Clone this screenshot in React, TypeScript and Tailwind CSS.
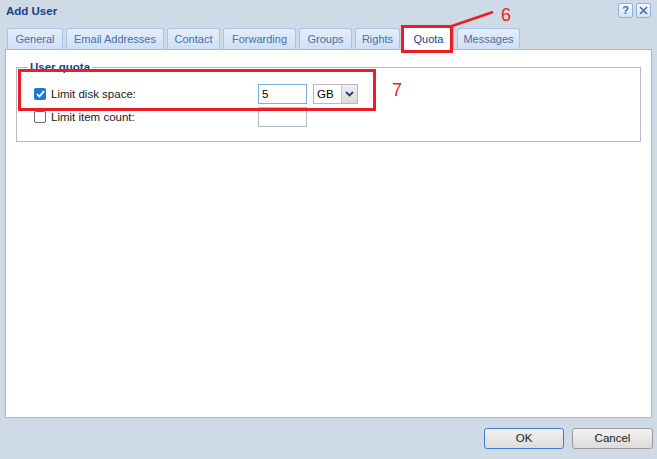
import React from "react";

const tabs = ["General", "Email Addresses", "Contact", "Forwarding", "Groups", "Rights", "Quota", "Messages"];
const widths = [56, 98, 53, 73, 53, 45, 51, 63];

export default function App() {
  return (
    <div
      className="relative w-[657px] h-[459px] bg-[#cfdae7] overflow-hidden flex flex-col text-[11px]"
      style={{ fontFamily: '"Liberation Sans", Arial, sans-serif' }}
    >
      {/* title bar */}
      <div className="h-[25px] flex items-center pl-[6px] pr-[6px] pt-[0px]">
        <div className="font-bold text-[#15428b] text-[11.5px] -mt-[2px]">Add User</div>
        <div className="ml-auto flex gap-[3px] -mt-[4px]">
          <div className="w-[15px] h-[15px] rounded-[2px] border border-[#8eb0dc] bg-gradient-to-b from-[#f6f9fd] to-[#d6e3f3] flex items-center justify-center text-[11px] font-bold text-[#3d6cb0] leading-none">?</div>
          <div className="w-[15px] h-[15px] rounded-[2px] border border-[#8eb0dc] bg-gradient-to-b from-[#f6f9fd] to-[#d6e3f3] flex items-center justify-center">
            <svg width="9" height="9" viewBox="0 0 9 9"><path d="M1 1L8 8M8 1L1 8" stroke="#3d6cb0" strokeWidth="1.6" /></svg>
          </div>
        </div>
      </div>
      {/* tabs */}
      <div className="flex items-end pl-[7px] h-[24px] gap-[3px]">
        {tabs.map((t, i) => {
          const active = t === "Quota";
          return (
            <div
              key={t}
              style={{ width: widths[i] }}
              className={
                active
                  ? "h-[24px] -mb-[1px] z-10 rounded-t-[3px] border border-b-0 border-[#99bbe8] bg-white text-[#15428b] flex items-center justify-center pt-[2px]"
                  : "h-[21px] rounded-t-[3px] border border-b-0 border-[#a9c3e6] bg-gradient-to-b from-[#e4eefb] to-[#cfdff4] text-[#4a6fa5] flex items-center justify-center pt-[1px]"
              }
            >
              {t}
            </div>
          );
        })}
      </div>
      {/* panel */}
      <div className="mx-[5px] h-[369px] bg-white border border-[#99bbe8] pt-[9px] px-[10px]">
        <fieldset className="border border-[#b5b8c8] h-[83px] px-[17px] pt-[0px]">
          <legend className="font-bold text-[#15428b] px-[2px] -ml-[6px] text-[11.5px]">User quota</legend>
          <div className="flex flex-col gap-[3px] pt-[8px]">
            <div className="flex items-center h-[20px]">
              <div className="w-[12px] h-[12px] rounded-[2px] bg-[#1f76d8] flex items-center justify-center">
                <svg width="9" height="8" viewBox="0 0 9 8"><path d="M1 4.2L3.4 6.5L8 1.2" stroke="white" strokeWidth="1.8" fill="none" /></svg>
              </div>
              <span className="ml-[5px] text-[#1a1a1a] w-[207px] text-[11.5px]">Limit disk space:</span>
              <div className="w-[49px] h-[20px] border border-[#7eadd9] flex items-center pl-[3px] text-[#000] text-[11.5px]">5</div>
              <div className="ml-[6px] w-[45px] h-[20px] border border-[#b5b8c8] flex">
                <div className="flex-1 flex items-center pl-[3px] text-[11.5px]">GB</div>
                <div className="w-[16px] bg-gradient-to-b from-[#f0f0f0] to-[#d9d9d9] border-l border-[#c5c5c5] flex items-center justify-center">
                  <svg width="9" height="6" viewBox="0 0 9 6"><path d="M1 1L4.5 4.5L8 1" stroke="#15428b" strokeWidth="1.8" fill="none" /></svg>
                </div>
              </div>
            </div>
            <div className="flex items-center h-[20px]">
              <div className="w-[12px] h-[12px] rounded-[2px] border border-[#6b6b6b] bg-white" />
              <span className="ml-[5px] text-[#1a1a1a] w-[207px] text-[11.5px]">Limit item count:</span>
              <div className="w-[49px] h-[20px] border border-[#b5b8c8]" />
            </div>
          </div>
        </fieldset>
      </div>
      {/* buttons */}
      <div className="flex justify-end gap-[8px] pr-[4px] pt-[10px]">
        <div className="w-[80px] h-[21px] rounded-[3px] border border-[#3f7ccf] bg-gradient-to-b from-[#f2f2f2] to-[#dcdcdc] flex items-center justify-center text-[#1a1a1a] text-[11.5px]">OK</div>
        <div className="w-[81px] h-[21px] rounded-[3px] border border-[#9a9a9a] bg-gradient-to-b from-[#f2f2f2] to-[#dcdcdc] flex items-center justify-center text-[#1a1a1a] text-[11.5px]">Cancel</div>
      </div>

      {/* annotations */}
      <div className="absolute left-[401px] top-[25px] w-[52px] h-[28px] border-[3px] border-[#ee1c25] z-20" />
      <svg className="absolute left-0 top-0 z-20" width="657" height="459">
        <path d="M452 26L493 12" stroke="#ee1c25" strokeWidth="2.5" />
      </svg>
      <div className="absolute left-[501px] top-[2px] text-[#ee1c25] text-[18px] z-20">6</div>
      <div className="absolute left-[18px] top-[69px] w-[358px] h-[42px] border-[3px] border-[#ee1c25] z-20" />
      <div className="absolute left-[392px] top-[77px] text-[#ee1c25] text-[18px] z-20">7</div>
    </div>
  );
}
